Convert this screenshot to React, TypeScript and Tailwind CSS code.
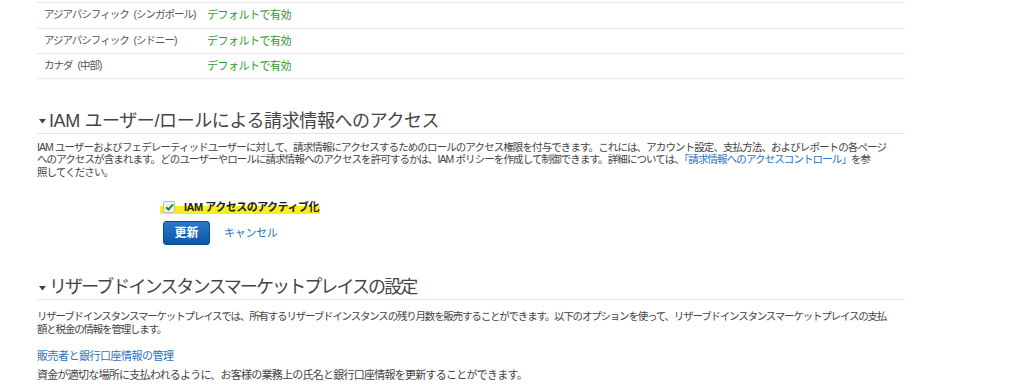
const font = "font-['Liberation_Sans','Noto_Sans_CJK_JP',sans-serif]";

const regions = [
  { name: "アジアパシフィック (シンガポール)", status: "デフォルトで有効" },
  { name: "アジアパシフィック (シドニー)", status: "デフォルトで有効" },
  { name: "カナダ (中部)", status: "デフォルトで有効" },
];

function Caret() {
  return (
    <svg width="7" height="5" viewBox="0 0 7 5" className="ml-[2px] mr-[3px] mt-[2px] shrink-0">
      <path d="M0 0 H7 L3.5 4.5 Z" fill="#444" />
    </svg>
  );
}

function SectionTitle({ children, className, track }: { children: React.ReactNode; className: string; track: string }) {
  return (
    <div className={"flex items-center border-b border-[#e4e4e4] pb-[1px] " + className}>
      <Caret />
      <h2 className={"text-[18px] leading-[22px] text-[#444] whitespace-nowrap " + track}>{children}</h2>
    </div>
  );
}

export default function App() {
  return (
    <div className={"bg-white w-[1024px] h-[392px] overflow-hidden " + font}>
      <div className="w-[868px] ml-[37px] pt-[2px]">
        {regions.map((r, i) => (
          <div
            key={r.name}
            className={
              "h-[25.5px] flex items-center border-t border-[#e8e8e8] " +
              (i === regions.length - 1 ? "border-b" : "")
            }
          >
            <span className="w-[170px] pl-[7px] text-[10.5px] tracking-[-1px] [word-spacing:3px] text-[#555] whitespace-nowrap">
              {r.name}
            </span>
            <span className="text-[11px] tracking-[-0.5px] text-[#2e9a2e]">{r.status}</span>
          </div>
        ))}

        <SectionTitle className="mt-[31px]" track="tracking-[-0.4px]">
          IAM ユーザー/ロールによる請求情報へのアクセス
        </SectionTitle>
        <p className="mt-[7px] text-[10.5px] leading-[12.5px] text-[#444] tracking-[-0.9px] whitespace-nowrap">
          IAM ユーザーおよびフェデレーティッドユーザーに対して、請求情報にアクセスするためのロールのアクセス権限を付与できます。これには、アカウント設定、支払方法、およびレポートの各ページ
          <br />
          へのアクセスが含まれます。どのユーザーやロールに請求情報へのアクセスを許可するかは、IAM ポリシーを作成して制御できます。詳細については、
          <a className="text-[#2a73c0]">「請求情報へのアクセスコントロール」</a>を参
          <br />
          照してください。
        </p>

        <div className="mt-[22px] ml-[123px] flex">
          <label className="flex items-center h-[14px] pl-[3px] pr-[1px] bg-[linear-gradient(transparent_45%,#f9ee1c_45%)]">
            <span className="w-[12px] h-[12px] border border-[#b9b9b9] rounded-[2px] bg-[#f4f4f4] flex items-center justify-center">
              <svg width="9" height="8" viewBox="0 0 9 8">
                <path d="M1 4.2 L3.4 6.5 L8 1.3" stroke="#1c8a2c" strokeWidth="2" fill="none" />
              </svg>
            </span>
            <span className="ml-[9px] text-[11px] font-bold text-[#222] tracking-[-0.5px] whitespace-nowrap">
              IAM アクセスのアクティブ化
            </span>
          </label>
        </div>

        <div className="mt-[7px] ml-[126px] flex items-center">
          <button className="w-[47px] h-[24px] rounded-[3px] border border-[#0a4a94] bg-[linear-gradient(#2b79c9,#0d56a6)] text-white text-[12px] font-bold">
            更新
          </button>
          <a className="ml-[14px] text-[11px] text-[#2a73c0] tracking-[-0.3px]">キャンセル</a>
        </div>

        <SectionTitle className="mt-[31px]" track="tracking-[-1.9px]">
          リザーブドインスタンスマーケットプレイスの設定
        </SectionTitle>
        <p className="mt-[10px] text-[10.5px] leading-[12.5px] text-[#444] tracking-[-1.2px] whitespace-nowrap">
          リザーブドインスタンスマーケットプレイスでは、所有するリザーブドインスタンスの残り月数を販売することができます。以下のオプションを使って、リザーブドインスタンスマーケットプレイスの支払
          <br />
          額と税金の情報を管理します。
        </p>

        <a className="block mt-[14px] text-[11px] leading-[14px] text-[#2a73c0] tracking-[-0.5px]">販売者と銀行口座情報の管理</a>
        <p className="mt-[5px] text-[11px] leading-[14px] text-[#444] tracking-[-0.75px] whitespace-nowrap">
          資金が適切な場所に支払われるように、お客様の業務上の氏名と銀行口座情報を更新することができます。
        </p>
      </div>
    </div>
  );
}
